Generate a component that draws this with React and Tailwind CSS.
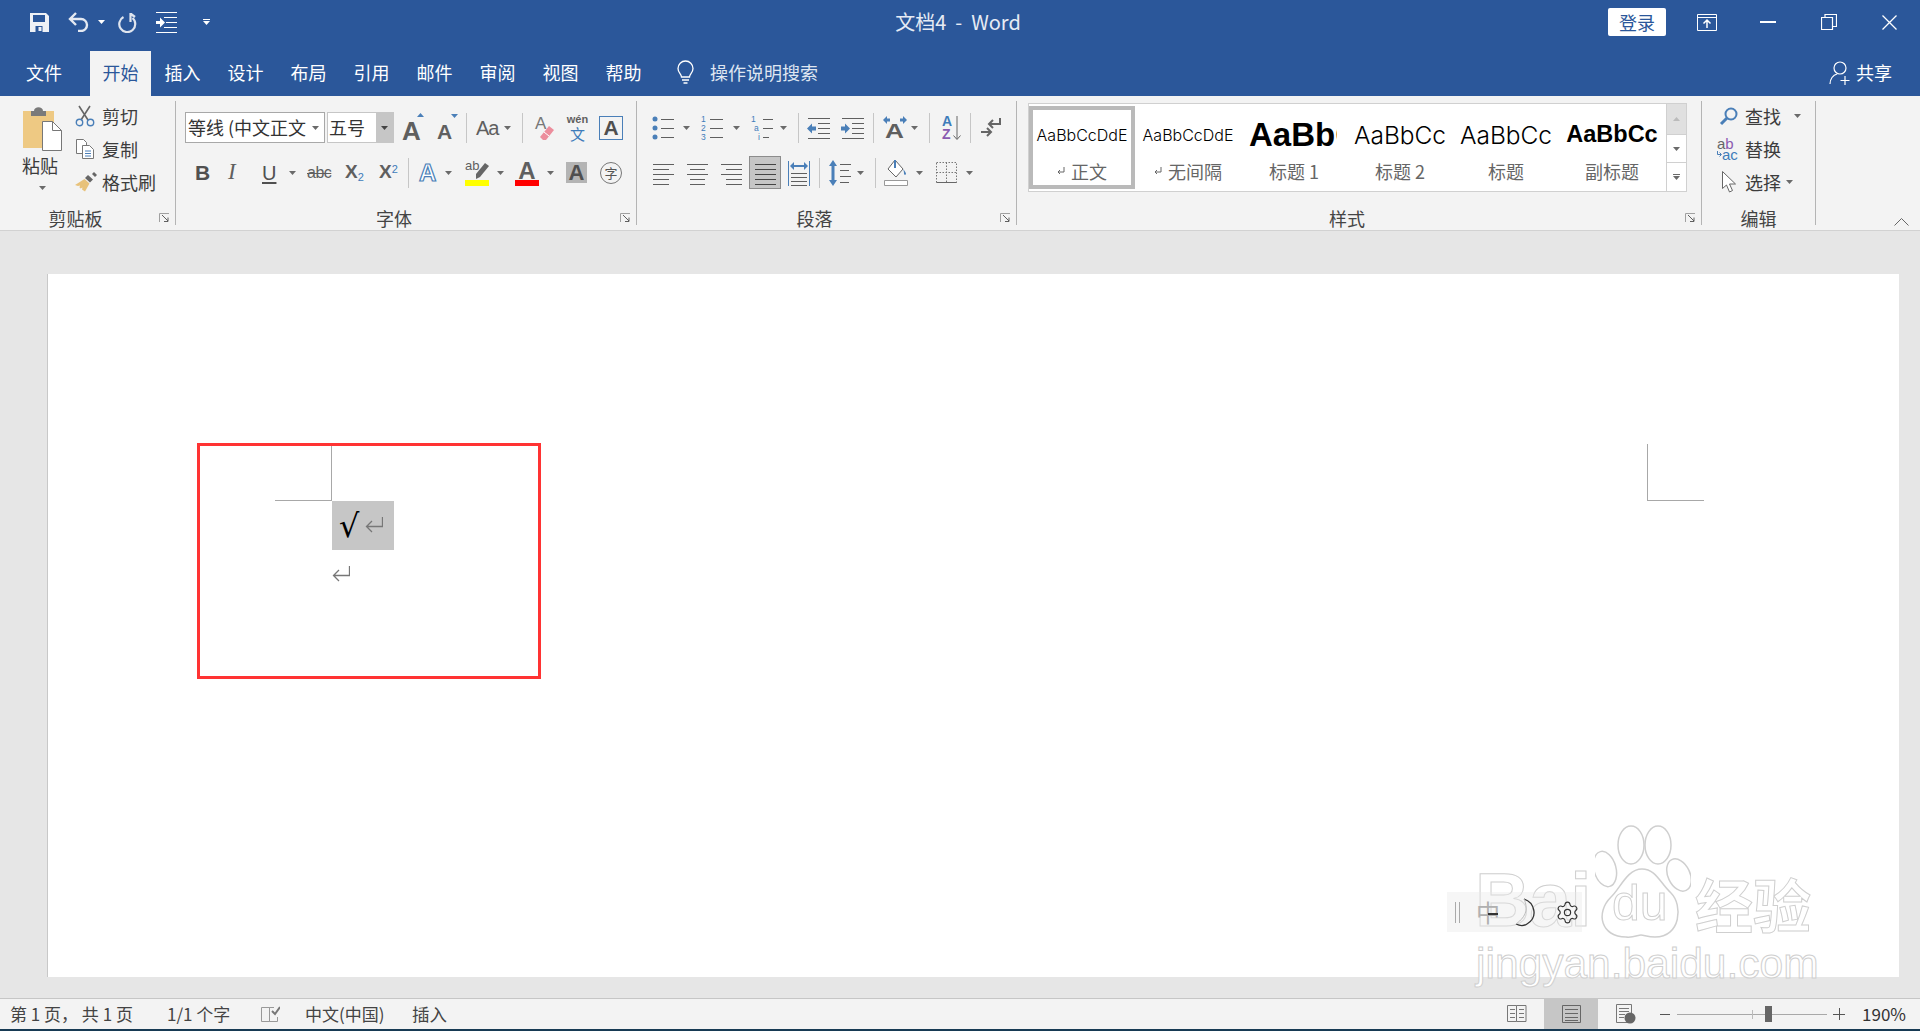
import React from "react";
import { Settings } from "lucide-react";

const BLUE = "#4a7fb8";
const GRAY = "#5f5f5f";

function Caret({ className = "", color = "#6a6a6a" }) {
  return (
    <svg className={`shrink-0 ${className}`} width="7" height="4" viewBox="0 0 7 4">
      <path d="M0 0h7L3.5 4z" fill={color} />
    </svg>
  );
}

function Ico({ w, h, className = "", children }) {
  return (
    <svg className={`shrink-0 ${className}`} width={w} height={h} viewBox={`0 0 ${w} ${h}`} fill="none">
      {children}
    </svg>
  );
}

function Sep({ className = "" }) {
  return <div className={`h-[30px] w-px shrink-0 bg-[#c6c6c6] ${className}`} />;
}

function GroupSep() {
  return <div className="my-[5px] w-px shrink-0 bg-[#b4b4b4]" />;
}

function Launcher() {
  return (
    <svg className="absolute bottom-[7px] right-[5px]" width="11" height="10" viewBox="0 0 11 10" fill="none">
      <path d="M.5 9V.5H10" stroke="#a0a0a0" />
      <path d="M3 2l6 6M9 4.5V8.5H5" stroke="#5f5f5f" />
    </svg>
  );
}

function Group({ label, launcher = true, className = "", children }) {
  return (
    <div className={`flex h-full shrink-0 flex-col pt-[5px] ${className}`}>
      <div className="min-h-0 flex-1">{children}</div>
      <div className={`relative h-[26px] pt-[1px] text-center text-[18px] leading-[26px] text-[#444] ${launcher ? "pr-[24px]" : ""}`}>
        {label}
        {launcher && <Launcher />}
      </div>
    </div>
  );
}

function Lines({ w = 21, ys, xs, color = GRAY }) {
  return (
    <Ico w={w} h={24}>
      {ys.map((y, i) => (
        <path key={y} d={`M${xs ? xs[i][0] : 0} ${y + 0.5}H${xs ? xs[i][1] : w}`} stroke={color} />
      ))}
    </Ico>
  );
}

function WideA({ className = "" }) {
  return <span className={`font-['Liberation_Sans'] font-bold leading-none ${className}`}>A</span>;
}

function ClipboardGroup() {
  const rows = [
    {
      label: "剪切",
      icon: (
        <Ico w={20} h={22}>
          <path d="M4 1l9 14M15 1L6 15" stroke="#666" strokeWidth="1.6" />
          <circle cx="4.5" cy="17.5" r="3.2" stroke={BLUE} strokeWidth="1.4" />
          <circle cx="15.5" cy="17.5" r="3.2" stroke={BLUE} strokeWidth="1.4" />
        </Ico>
      ),
    },
    {
      label: "复制",
      icon: (
        <Ico w={20} h={20}>
          <path d="M1.5.5h7l3 3v11h-10z" fill="#fff" stroke="#777" />
          <path d="M7.5 6.5h7l4 4v9h-11z" fill="#fff" stroke="#777" />
          <path d="M10 12h6M10 14.5h6M10 17h6" stroke={BLUE} />
        </Ico>
      ),
    },
    {
      label: "格式刷",
      icon: (
        <Ico w={22} h={20}>
          <path d="M13 3l5 4.5-3 3L10 6z" fill="#666" />
          <path d="M17 2l2-2 3 3-2 2z" fill="#666" />
          <path d="M9.5 7l5 4.5-4.5 8-3-2 .5-2-2 1-1-1 .5-2-2 .5L0 13z" fill="#e8c27a" />
        </Ico>
      ),
    },
  ];
  return (
    <Group label="剪贴板" className="w-[175px]">
      <div className="flex">
        <div className="ml-[22px] flex w-[53px] flex-col pt-[5px]">
          <Ico w={40} h={45}>
            <path d="M1 5h31v37H1z" fill="#eec983" />
            <path d="M9 5h3c0-5 9-5 9 0h3v5H9z" fill="#7a7a7a" />
            <path d="M20.5 15.500h10l9 9v20h-19z" fill="#fff" stroke="#777" />
            <path d="M30.500 15.500v9h9" stroke="#777" />
          </Ico>
          <div className="h-[28px] text-[18px] leading-[28px] text-[#3c3c3c]">粘贴</div>
          <Caret className="ml-[17px] mt-[7px]" />
        </div>
        <div className="flex flex-col gap-[3px]">
          {rows.map((r) => (
            <div key={r.label} className="flex h-[30px] items-center">
              <div className="flex w-[27px] shrink-0">{r.icon}</div>
              <span className="text-[18px] text-[#3c3c3c]">{r.label}</span>
            </div>
          ))}
        </div>
      </div>
    </Group>
  );
}

function FontGroup() {
  return (
    <Group label="字体" className="w-[460px]">
      <div className="mt-[11px] flex h-[31px] items-center">
        <div className="ml-[9px] flex h-[31px] w-[140px] items-center justify-between border border-[#a8a8a8] bg-white pl-[2px] pr-[5px]">
          <span className="whitespace-nowrap text-[18px] text-[#333]">等线 (中文正文</span>
          <Caret />
        </div>
        <div className="ml-[2px] flex h-[31px] w-[67px] items-center border border-[#c6c6c6] bg-white pl-[1px]">
          <span className="flex-1 text-[18px] text-[#333]">五号</span>
          <div className="flex h-full w-[17px] items-center justify-center bg-[#c6c6c6]">
            <Caret color="#444" />
          </div>
        </div>
        <div className="relative ml-[8px] w-[20px] pt-[4px] text-[26px] leading-none text-[#5f5f5f]">
          <WideA />
          <Caret className="absolute right-[-2px] top-[1px] rotate-180" color={BLUE} />
        </div>
        <div className="relative ml-[15px] w-[19px] pt-[7px] text-[21px] leading-none text-[#5f5f5f]">
          <WideA />
          <Caret className="absolute right-[-2px] top-[1px]" color={BLUE} />
        </div>
        <Sep className="ml-[10px]" />
        <span className="ml-[9px] w-[24px] whitespace-nowrap font-['Liberation_Sans'] text-[20px] tracking-[-1px] text-[#5f5f5f]">Aa</span>
        <Caret className="ml-[4px]" />
        <Sep className="ml-[11px]" />
        <div className="relative ml-[12px] h-[26px] w-[20px]">
          <span className="absolute left-0 top-[-4px] font-['Liberation_Sans'] text-[17px] text-[#777]">A</span>
          <svg className="absolute bottom-0 right-0" width="16" height="16" viewBox="0 0 16 16">
            <path d="M10 1l5 4-8 10H4L1 12z" fill="#ec8d9c" />
            <path d="M5 7l5 4" stroke="#fff" />
          </svg>
        </div>
        <div className="ml-[12px] flex w-[21px] flex-col items-center">
          <span className="font-['Liberation_Sans'] text-[11px] font-bold leading-[11px] text-[#5f5f5f]">wén</span>
          <span className="text-[15px] leading-[17px] text-[#3f7cba]">文</span>
        </div>
        <div className="ml-[11px] flex h-[24px] w-[24px] items-center justify-center border border-[#4a7fb8]">
          <WideA className="text-[21px] text-[#4f4f4f]" />
        </div>
      </div>
      <div className="mt-[13px] flex h-[33px] items-center">
        <span className="ml-[19px] w-[12px] font-['Liberation_Sans'] text-[21px] font-bold text-[#505050]">B</span>
        <span className="ml-[21px] w-[12px] font-['Liberation_Serif'] text-[23px] italic text-[#5f5f5f]">I</span>
        <span className="ml-[22px] w-[14px] font-['Liberation_Sans'] text-[20px] text-[#505050] underline underline-offset-2">U</span>
        <Caret className="ml-[13px]" />
        <span className="ml-[11px] w-[24px] font-['Liberation_Sans'] text-[16px] tracking-[-.5px] text-[#5f5f5f] line-through">abc</span>
        <span className="ml-[14px] w-[20px] font-['Liberation_Sans'] text-[19px] font-bold text-[#5f5f5f]">
          X<sub className="text-[11px] font-normal text-[#3f7cba]">2</sub>
        </span>
        <span className="ml-[14px] w-[19px] font-['Liberation_Sans'] text-[19px] font-bold text-[#5f5f5f]">
          X<sup className="text-[11px] font-normal text-[#3f7cba]">2</sup>
        </span>
        <Sep className="ml-[10px]" />
        <WideA className="ml-[10px] w-[17px] text-[24px] text-[#fff] [-webkit-text-stroke:1.2px_#4a7fb8]" />
        <Caret className="ml-[9px]" />
        <div className="ml-[13px] flex w-[24px] flex-col">
          <div className="relative h-[21px]">
            <span className="absolute left-0 top-[-3px] font-['Liberation_Sans'] text-[13px] text-[#5f5f5f]">ab</span>
            <svg className="absolute bottom-0 right-0" width="15" height="17" viewBox="0 0 15 17">
              <path d="M11 0l4 3L6 14l-4 2 0-5z" fill="#666" />
            </svg>
          </div>
          <div className="h-[6px] bg-[#ffff00]" />
        </div>
        <Caret className="ml-[8px]" />
        <div className="ml-[11px] flex w-[24px] flex-col items-center">
          <WideA className="h-[21px] text-[24px] text-[#5f5f5f]" />
          <div className="h-[6px] w-full bg-[#ff0000]" />
        </div>
        <Caret className="ml-[8px]" />
        <div className="ml-[12px] flex h-[21px] w-[21px] items-center justify-center bg-[#b4b4b4]">
          <WideA className="text-[22px] text-[#4f4f4f]" />
        </div>
        <div className="ml-[13px] flex h-[22px] w-[22px] items-center justify-center rounded-full border-[1.5px] border-[#777] text-[13px] leading-none text-[#555]">
          字
        </div>
      </div>
    </Group>
  );
}

function ListIcon({ kind }) {
  const marks =
    kind === "bullet"
      ? [0, 1, 2].map((i) => <circle key={i} cx="3" cy={3 + i * 9} r="2.5" fill={BLUE} />)
      : null;
  return (
    <div className="relative h-[24px] w-full">
      <Ico w={24} h={24}>
        {marks}
        <path d={`M${kind === "multi" ? 12 : 9} 3.500H22M${kind === "multi" ? 12 : 9} 12.500H22M${kind === "multi" ? 12 : 9} 21.500H${kind === "multi" ? 18 : 22}`} stroke={GRAY} />
      </Ico>
      {kind !== "bullet" && (
        <div className="absolute left-0 top-[-1px] flex flex-col font-['Liberation_Sans'] text-[8.500px] leading-[9px] text-[#3f7cba]">
          <span>1</span>
          <span className={kind === "multi" ? "pl-[3px]" : ""}>{kind === "multi" ? "a" : "2"}</span>
          <span className={kind === "multi" ? "pl-[7px]" : ""}>{kind === "multi" ? "i" : "3"}</span>
        </div>
      )}
    </div>
  );
}

function IndentIcon({ dir }) {
  const left = dir === "out";
  return (
    <Ico w={23} h={24}>
      <path d="M1 2.500h22M11 7.500h12M11 12.500h12M11 17.500h12M1 22.500h22" stroke={GRAY} />
      <path d={left ? "M0 12.500l5-5v3h4v4H5v3z" : "M9 12.500l-5-5v3H0v4h4v3z"} fill={BLUE} />
    </Ico>
  );
}

function ParagraphGroup() {
  return (
    <Group label="段落" className="w-[379px]">
      <div className="mt-[11px] flex h-[31px] items-center">
        <div className="ml-[15px] w-[22px]"><ListIcon kind="bullet" /></div>
        <Caret className="ml-[9px]" />
        <div className="ml-[11px] w-[24px]"><ListIcon kind="num" /></div>
        <Caret className="ml-[8px]" />
        <div className="ml-[11px] w-[23px]"><ListIcon kind="multi" /></div>
        <Caret className="ml-[6px]" />
        <Sep className="ml-[11px]" />
        <div className="ml-[8px]"><IndentIcon dir="out" /></div>
        <div className="ml-[11px]"><IndentIcon dir="in" /></div>
        <Sep className="ml-[9px]" />
        <div className="relative ml-[9px] h-[24px] w-[24px] text-center">
          <span className="inline-block scale-x-125 font-['Liberation_Sans'] text-[21px] font-bold leading-[30px] text-[#5f5f5f]">A</span>
          <svg className="absolute left-0 top-0" width="24" height="8" viewBox="0 0 24 8">
            <path d="M0 4l4-4v2.500h3v3H4V8zM24 4l-4-4v2.500h-3v3h3V8z" fill={BLUE} />
          </svg>
        </div>
        <Caret className="ml-[4px]" />
        <Sep className="ml-[11px]" />
        <div className="relative ml-[12px] flex h-[26px] w-[19px] flex-col font-['Liberation_Sans'] text-[14px] font-bold leading-[13px]">
          <span className="text-[#3f7cba]">A</span>
          <span className="text-[#8a5ab0]">Z</span>
          <svg className="absolute right-0 top-0" width="8" height="26" viewBox="0 0 8 26" fill="none">
            <path d="M4 1v23M.5 20.500L4 24.500l3.500-4" stroke="#666" />
          </svg>
        </div>
        <Sep className="ml-[9px]" />
        <Ico w={20} h={24} className="ml-[10px]">
          <path d="M19 2v6H9M12 4L8 8l4 4" stroke="#666" strokeWidth="2" />
          <path d="M0 16h10M6 12l4 4-4 4" stroke="#666" strokeWidth="2" />
        </Ico>
      </div>
      <div className="mt-[13px] flex h-[33px] items-center">
        <div className="ml-[16px]"><Lines ys={[3, 8, 13, 18, 23]} xs={[[0, 21], [0, 16], [0, 21], [0, 16], [0, 16]]} /></div>
        <div className="ml-[13px]"><Lines ys={[3, 8, 13, 18, 23]} xs={[[0, 21], [3, 18], [0, 21], [3, 18], [3, 18]]} /></div>
        <div className="ml-[13px]"><Lines ys={[3, 8, 13, 18, 23]} xs={[[0, 21], [5, 21], [0, 21], [5, 21], [5, 21]]} /></div>
        <div className="ml-[7px] flex h-[33px] w-[32px] items-center justify-center border border-[#8c8c8c] bg-[#c6c6c6]">
          <Lines ys={[3, 8, 13, 18, 23]} color="#444" />
        </div>
        <Ico w={22} h={28} className="ml-[7px]">
          <path d="M.500 2v25M21.500 2v25" stroke={BLUE} />
          <path d="M2 7l4-4v3h10V3l4 4-4 4V8H6v3z" fill={BLUE} />
          <path d="M3 14.500h16M3 18.500h16M3 22.500h16M3 26.500h16" stroke={GRAY} />
        </Ico>
        <Sep className="ml-[9px]" />
        <Ico w={22} h={28} className="ml-[9px]">
          <path d="M4 1l4 6H5.500v14H8l-4 6-4-6h2.500V7H0z" fill={BLUE} />
          <path d="M11 5.500h11M11 11.500h9M11 17.500h11M11 23.500h9" stroke={GRAY} />
        </Ico>
        <Caret className="ml-[6px]" />
        <Sep className="ml-[11px]" />
        <Ico w={24} h={28} className="ml-[8px]">
          <path d="M11 1l8 9-7 8-8-8z" fill="#fff" stroke="#666" />
          <path d="M11 1v8" stroke={BLUE} strokeWidth="2" />
          <path d="M19 10c2 2 3 4 3 5s-2 1-2 0 0-3-1-5z" fill={BLUE} />
          <path d="M.500 21.500h23v5H.500z" fill="#fff" stroke="#999" />
        </Ico>
        <Caret className="ml-[8px]" />
        <Ico w={21} h={21} className="ml-[13px]">
          <path d="M.5.5h20v20H.5zM10.500.5v20M.5 10.500h20" stroke="#777" strokeDasharray="1.500 1.500" />
          <path d="M.5 20.500h20" stroke="#666" />
        </Ico>
        <Caret className="ml-[9px]" />
      </div>
    </Group>
  );
}

const styles = [
  { sample: "AaBbCcDdE", label: "正文", mark: true, sampleClass: "font-['Inter'] text-[16px] font-light" },
  { sample: "AaBbCcDdE", label: "无间隔", mark: true, sampleClass: "font-['Inter'] text-[16px] font-light" },
  { sample: "AaBbC", label: "标题 1", clip: true, sampleClass: "font-['Liberation_Sans'] text-[33px] font-bold" },
  { sample: "AaBbCc", label: "标题 2", sampleClass: "font-['Inter'] text-[24.500px] font-light" },
  { sample: "AaBbCc", label: "标题", sampleClass: "font-['Inter'] text-[24.500px] font-light" },
  { sample: "AaBbCc", label: "副标题", sampleClass: "font-['Liberation_Sans'] text-[23.500px] font-bold" },
];

function StyleItem({ item, selected }) {
  return (
    <div className={`flex h-[83px] w-[106px] shrink-0 flex-col items-center overflow-hidden ${selected ? "border-[4px] border-[#bababa] bg-white" : "border-[4px] border-transparent"}`}>
      <div className={`flex h-[49px] items-center overflow-hidden whitespace-nowrap pt-[1px] text-black ${item.clip ? "ml-[2px] w-[90px] justify-start self-start pl-[2px]" : "w-[94px] justify-center"}`}>
        <span className={item.sampleClass}>{item.sample}</span>
      </div>
      <div className="flex items-center gap-[6px] text-[18px] leading-[24px] text-[#666]">
        {item.mark && (
          <Ico w={8} h={9}>
            <path d="M7 0v5H1M3 3L1 5l2 2" stroke="#666" />
          </Ico>
        )}
        <span>{item.label}</span>
      </div>
    </div>
  );
}

function StylesGroup() {
  return (
    <Group label="样式" className="w-[684px]">
      <div className="ml-[11px] mt-[2px] flex h-[89px] w-[659px] items-center border border-[#d0d0d0] bg-white pr-[20px]">
        {styles.map((s, i) => (
          <StyleItem key={s.label} item={s} selected={i === 0} />
        ))}
        <div className="ml-auto mr-[-20px] flex h-full w-[20px] flex-col border-l border-[#d0d0d0]">
          <div className="flex h-[31px] items-center justify-center border-b border-[#d0d0d0] bg-[#e0e0e0]">
            <Caret className="rotate-180" color="#bbb" />
          </div>
          <div className="flex h-[28px] items-center justify-center border-b border-[#d0d0d0]">
            <Caret />
          </div>
          <div className="flex flex-1 flex-col items-center justify-center gap-[1px]">
            <div className="h-px w-[7px] bg-[#6a6a6a]" />
            <Caret />
          </div>
        </div>
      </div>
    </Group>
  );
}

function EditGroup() {
  return (
    <Group label="编辑" launcher={false} className="w-[113px]">
      <div className="flex flex-col gap-[3px] text-[18px] text-[#3c3c3c]">
        <div className="flex h-[30px] items-center">
          <div className="flex w-[43px] justify-center pl-[10px]">
            <Ico w={19} h={19}>
              <circle cx="12" cy="7" r="5.500" stroke={BLUE} strokeWidth="2" />
              <path d="M8 11l-6 6" stroke={BLUE} strokeWidth="3" />
            </Ico>
          </div>
          <span>查找</span>
          <Caret className="ml-[13px]" />
        </div>
        <div className="flex h-[30px] items-center">
          <div className="ml-[15px] flex w-[28px] flex-col font-['Liberation_Sans'] text-[15px] leading-[11px]">
            <span className="h-[11px]"><span className="text-[#666]">a</span><span className="text-[#8a5ab0]">b</span></span>
            <span className="flex h-[11px] items-center">
              <Ico w={5} h={7}>
                <path d="M.5 0v3.500H4M2.500 1.500L4.500 3.500 2.500 5.500" stroke={BLUE} />
              </Ico>
              <span className="text-[#3f7cba]">ac</span>
            </span>
          </div>
          <span>替换</span>
        </div>
        <div className="flex h-[30px] items-center">
          <div className="ml-[20px] flex w-[23px]">
            <Ico w={14} h={22}>
              <path d="M.5.5v17l4-3.500 3 7 3-1.500-3-6.500h6z" fill="#fff" stroke="#666" />
            </Ico>
          </div>
          <span>选择</span>
          <Caret className="ml-[5px]" />
        </div>
      </div>
    </Group>
  );
}

function QuickAccess() {
  return (
    <div className="flex flex-1 basis-0 items-center">
      <Ico w={19} h={19} className="ml-[30px]">
        <path d="M0 0h16l3 3v16H0z" fill="#eef1f6" />
        <path d="M3 2h12v7H3z" fill="#2b579a" />
        <path d="M5.500 13h7v6h-7z" fill="#2b579a" />
        <path d="M8.500 14h3v4h-3z" fill="#eef1f6" />
      </Ico>
      <Ico w={21} h={20} className="ml-[19px]">
        <path d="M8 1L2 7l6 6M2 7h11a6 6 0 0 1 0 12h-3" stroke="#e4e9f2" strokeWidth="2.400" />
      </Ico>
      <Caret className="ml-[9px]" color="#fff" />
      <Ico w={19} h={21} className="ml-[13px]">
        <path d="M5.500 5a8 8 0 1 0 9 1" stroke="#dfe5ef" strokeWidth="2.200" />
        <path d="M12.500 1v9M13 2l4 3" stroke="#dfe5ef" strokeWidth="2.200" />
      </Ico>
      <Ico w={21} h={21} className="ml-[19px]">
        <path d="M0 .5h21M8 5.500h13M10 10.500h11M8 15.500h13M0 20.500h21" stroke="#fff" />
        <path d="M0 9h4V5.500l5 5-5 5V12H0z" fill="#fff" />
      </Ico>
      <div className="ml-[26px] flex flex-col gap-[1px]">
        <div className="h-[1.500px] w-[7px] bg-white" />
        <Caret color="#fff" />
      </div>
    </div>
  );
}

function WindowButtons() {
  return (
    <div className="flex flex-1 basis-0 items-center justify-end">
      <div className="mr-[10px] flex h-[28px] w-[58px] items-center justify-center rounded-[2px] bg-white text-[18px] text-[#2b579a]">登录</div>
      <div className="flex h-[28px] w-[61px] items-center justify-center">
        <Ico w={20} h={17}>
          <path d="M.5.500h19v16H.500zM1 3.500h18" stroke="#fff" />
          <path d="M10 14V7M6.500 9.500L10 6l3.500 3.500" stroke="#fff" strokeWidth="1.500" />
        </Ico>
      </div>
      <div className="flex h-[28px] w-[61px] items-center justify-center">
        <div className="h-[1.500px] w-[16px] bg-white" />
      </div>
      <div className="flex h-[28px] w-[61px] items-center justify-center">
        <Ico w={16} h={16}>
          <path d="M.5 3.500h11v12H.5z" stroke="#fff" strokeWidth="1.200" />
          <path d="M4 3V.5h11.500v12H12" stroke="#fff" strokeWidth="1.200" />
        </Ico>
      </div>
      <div className="flex h-[28px] w-[61px] items-center justify-center">
        <Ico w={15} h={15}>
          <path d="M.5.500l14 14M14.500.500l-14 14" stroke="#fff" strokeWidth="1.300" />
        </Ico>
      </div>
    </div>
  );
}

const tabs = ["插入", "设计", "布局", "引用", "邮件", "审阅", "视图", "帮助"];

function TabRow() {
  return (
    <div className="flex h-[52px] items-end text-[18px] text-white">
      <div className="ml-[13px] flex h-[45px] w-[62px] items-center justify-center pb-[2px]">文件</div>
      <div className="ml-[15px] flex h-[45px] w-[61px] items-center justify-center bg-[#f3f3f3] pb-[2px] text-[#2b579a]">开始</div>
      {tabs.map((t) => (
        <div key={t} className="flex h-[45px] w-[63px] items-center justify-center pb-[2px]">{t}</div>
      ))}
      <div className="ml-[22px] flex h-[45px] items-center pb-[2px]">
        <Ico w={17} h={25}>
          <path d="M4.500 17c0-3-3.500-4-3.500-8.500a7.500 7.500 0 0 1 15 0C16 13 12.500 14 12.500 17z" stroke="#fff" strokeWidth="1.300" />
          <path d="M5 20h7M6.500 23h4" stroke="#fff" strokeWidth="1.300" />
        </Ico>
        <span className="ml-[16px] text-[#dfe6f1]">操作说明搜索</span>
      </div>
      <div className="ml-auto mr-[28px] flex h-[45px] items-center pb-[2px]">
        <Ico w={22} h={24}>
          <circle cx="11" cy="7" r="6" stroke="#fff" strokeWidth="1.200" />
          <path d="M1 23c0-5 3-9 7-10M16 15v9M11.500 19.500h9" stroke="#fff" strokeWidth="1.200" />
        </Ico>
        <span className="ml-[5px]">共享</span>
      </div>
    </div>
  );
}

function ReturnMark({ className = "" }) {
  return (
    <Ico w={18} h={17} className={className}>
      <path d="M17.500 0v9.500H1.500M7 4L1.500 9.500 7 15" stroke="#777" strokeWidth="1.300" />
    </Ico>
  );
}

function Page() {
  return (
    <div className="relative h-[703px] w-[1852px] border-l border-[#c8c8c8] bg-white pt-[170px]">
      <div className="flex justify-between pl-[227px] pr-[195px]">
        <div className="h-[57px] w-[57px] border-b border-r border-[#a8a8a8]" />
        <div className="h-[57px] w-[57px] border-b border-l border-[#a8a8a8]" />
      </div>
      <div className="pl-[284px]">
        <div className="flex h-[49px] w-[62px] items-center bg-[#c6c6c6] pl-[7px]">
          <span className="w-[26px] font-['DejaVu_Sans'] text-[32px] leading-none text-black">√</span>
          <ReturnMark />
        </div>
        <ReturnMark className="mt-[16px]" />
      </div>
      <div className="absolute left-[149px] top-[169px] h-[236px] w-[344px] border-[3px] border-[#f33]" />
    </div>
  );
}

function Watermark() {
  const outline = "text-white [-webkit-text-stroke:1px_#cfcfcf]";
  return (
    <div className="pointer-events-none absolute left-[1475px] top-[825px] h-[165px] w-[345px] font-['Liberation_Sans']">
      <svg className="absolute left-[120px] top-0" width="96" height="115" viewBox="0 0 96 115" fill="#fff" stroke="#cfcfcf" strokeWidth="1.500">
        <ellipse cx="36" cy="20" rx="13" ry="19" />
        <ellipse cx="63" cy="20" rx="13" ry="19" />
        <ellipse cx="10" cy="44" rx="11" ry="18" transform="rotate(-15 10 44)" />
        <ellipse cx="84" cy="50" rx="11" ry="17" transform="rotate(-25 84 50)" />
        <path d="M47 44c14 0 18 14 29 24 12 12 10 44-16 44-7 0-11-2-14-2s-8 3-15 2C6 112 0 88 16 72c9-8 16-28 31-28z" />
      </svg>
      <span className={`absolute left-0 top-[37px] text-[76px] font-bold leading-none tracking-[-1px] ${outline}`}>Bai</span>
      <span className={`absolute left-[137px] top-[53px] text-[50px] leading-none ${outline}`}>du</span>
      <span className={`absolute left-[220px] top-[49px] text-[58px] font-bold leading-none [font-family:'Noto_Sans_CJK_SC',sans-serif] ${outline}`}>经验</span>
      <span className={`absolute left-[1px] top-[118px] whitespace-nowrap text-[42.500px] leading-none ${outline}`}>jingyan.baidu.com</span>
    </div>
  );
}

function ImeBar() {
  return (
    <div className="absolute left-[1447px] top-[892px] flex h-[40px] w-[135px] items-center bg-[#e8e8e8]/40">
      <div className="ml-[8px] h-[21px] w-[5px] border-x border-[#aaa]" />
      <span className="relative ml-[16px] text-[24px] leading-none text-[#b0b0b0]">
        中
        <span className="absolute left-[12px] top-[13px] h-[2px] w-[10px] bg-[#333]" />
      </span>
      <Ico w={22} h={29} className="ml-[15px]">
        <path d="M9 1c10 3 15 18 3 25-3 2-7 2-11 0" stroke="#333" strokeWidth="1.300" />
        <path d="M9 1c4 9 3 17-8 25" stroke="#bbb" />
      </Ico>
      <Settings size={25} strokeWidth={1.1} color="#333" className="ml-[18px] shrink-0" />
    </div>
  );
}

function StatusBar() {
  return (
    <div className="flex h-[33px] shrink-0 flex-col border-t border-[#c6c6c6] bg-[#f3f3f3]">
      <div className="flex flex-1 items-center text-[17px] text-[#444]">
        <span className="ml-[10px] w-[125px] whitespace-pre">第 1 页， 共 1 页</span>
        <span className="ml-[32px] w-[65px] whitespace-pre">1/1 个字</span>
        <Ico w={19} h={18} className="ml-[29px]">
          <path d="M.5 2.500h8v14h-8zM8.500 2.500v14h8V12M13 2.500H8.500" stroke="#999" />
          <path d="M11 6l3 3 5-7" stroke="#777" strokeWidth="2" />
        </Ico>
        <span className="ml-[25px] w-[78px] whitespace-nowrap">中文(中国)</span>
        <span className="ml-[29px] text-[17.500px]">插入</span>
        <div className="ml-auto flex h-full items-center">
          <Ico w={20} h={18}>
            <path d="M.5.500h9v16h-9zM9.500.500h9.500v16H9.500" stroke="#777" />
            <path d="M3 4.500h5M3 8.500h5M3 12.500h5M12 4.500h5M12 8.500h5M12 12.500h5" stroke="#777" />
          </Ico>
          <div className="ml-[17px] flex h-full w-[54px] items-center justify-center bg-[#c6c6c6]">
            <Ico w={19} h={18}>
              <path d="M.5.500h18v17H.5z" stroke="#666" />
              <path d="M3 4.500h13M3 8.500h13M3 12.500h13M3 15.500h13" stroke="#666" />
            </Ico>
          </div>
          <Ico w={20} h={20} className="ml-[18px]">
            <path d="M.5.500h15v18H.5zM3 4.500h10M3 7.500h10M3 10.500h6M3 13.500h5" stroke="#777" />
            <circle cx="14" cy="14" r="5.500" fill="#666" />
          </Ico>
          <div className="ml-[24px] h-px w-[10px] bg-[#555]" />
          <div className="relative ml-[7px] h-px w-[150px] bg-[#a8a8a8]">
            <div className="absolute left-[75px] top-[-4px] h-[9px] w-px bg-[#bbb]" />
            <div className="absolute left-[88px] top-[-8px] h-[16px] w-[7px] bg-[#666]" />
          </div>
          <div className="relative ml-[6px] h-[12px] w-[12px]">
            <div className="absolute left-0 top-[6px] h-px w-[12px] bg-[#555]" />
            <div className="absolute left-[6px] top-0 h-[12px] w-px bg-[#555]" />
          </div>
          <span className="ml-[17px] mr-[14px] text-[#333]">190%</span>
        </div>
      </div>
      <div className="h-[2px] bg-[#173a54]" />
    </div>
  );
}

export default function App() {
  return (
    <div className="relative flex h-[1031px] w-[1920px] flex-col overflow-hidden bg-[#e6e6e6] [font-family:'Noto_Sans_CJK_SC','Liberation_Sans',sans-serif]">
      <div className="h-[96px] shrink-0 bg-[#2b579a]">
        <div className="flex h-[44px] items-center">
          <QuickAccess />
          <div className="pr-[4px] text-[20px] text-[#e6ebf4]">文档4&nbsp; -&nbsp; Word</div>
          <WindowButtons />
        </div>
        <TabRow />
      </div>

      <div className="flex h-[135px] shrink-0 border-b border-[#d2d2d2] bg-[#f3f3f3]">
        <ClipboardGroup />
        <GroupSep />
        <FontGroup />
        <GroupSep />
        <ParagraphGroup />
        <GroupSep />
        <StylesGroup />
        <GroupSep />
        <EditGroup />
        <GroupSep />
        <div className="ml-auto mr-[11px] mt-[122px]">
          <Ico w={15} h={8}>
            <path d="M.5 7.500l7-7 7 7" stroke="#666" />
          </Ico>
        </div>
      </div>

      <div className="flex-1 pl-[47px] pt-[43px]">
        <Page />
      </div>

      <StatusBar />
      <Watermark />
      <ImeBar />
    </div>
  );
}
